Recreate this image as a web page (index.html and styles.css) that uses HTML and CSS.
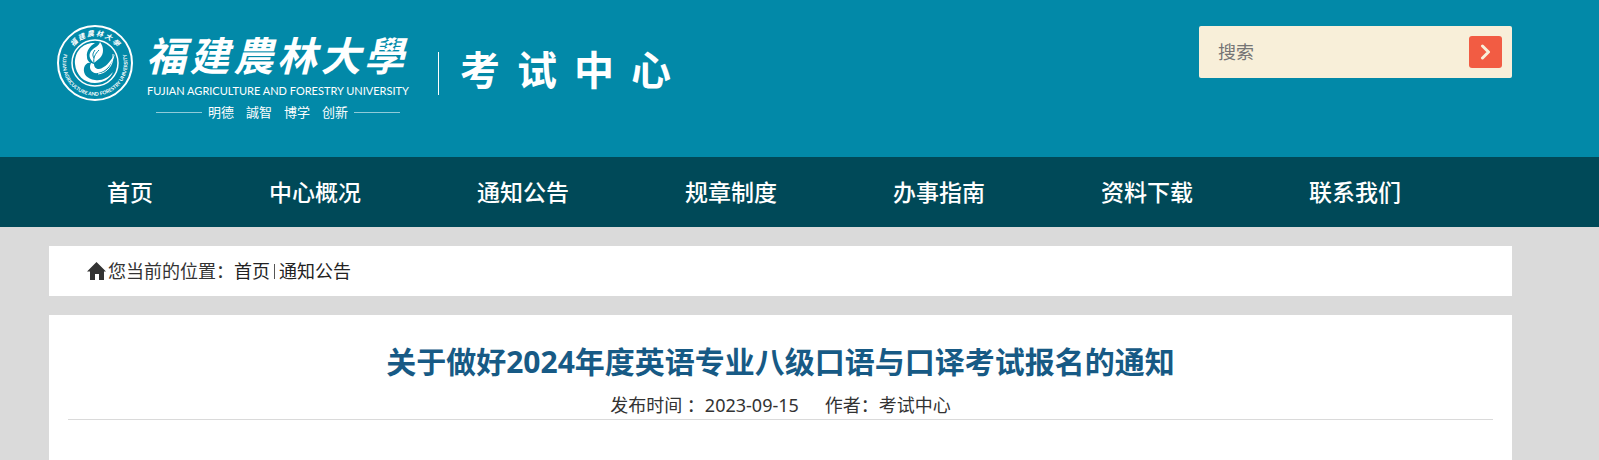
FILE: index.html
```
<!DOCTYPE html>
<html lang="zh-CN">

<head>
    <meta charset="UTF-8">
    <meta name="viewport" content="width=device-width, initial-scale=1.0">
    <title>考试中心</title>
    <link rel="stylesheet" href="styles.css">
</head>

<body>

    <!-- Header -->
    <header class="header">
        <div class="brand">
            <svg class="emblem" viewBox="0 0 78 78" aria-hidden="true">
                <defs>
                    <path id="arcTop" d="M12 39a27 27 0 0 1 54 0" />
                    <path id="arcBottom" d="M10.200 24.200A32.500 32.500 0 1 0 67.800 24.200" />
                </defs>
                <circle cx="39" cy="39" r="37" fill="none" stroke="#fff" stroke-width="2" />
                <circle cx="39" cy="39" r="23" fill="none" stroke="#fff" stroke-width="1.500" />
                <path fill="#fff" d="M39 19C27 18 18 28 19 40c1 11 9 19 20 19 8 0 15-4 18-11-5 6-11 9-18 8-8-1-12-6-11-12 1-4 4-6 7-5-3 6 1 11 7 10 8-1 14-9 17-19-5 8-10 14-16 15-3 0-5-2-5-5-4-1-7-3-7-7-1-6 3-11 8-14z" />
                <path fill="#fff" d="M38 39c-5-4-6-9-2-13 3-3 7-4 8-8 4 5 4 12 0 16-2 2-4 3-6 5z" />
                <path fill="none" stroke="#0289a8" stroke-width="1" d="M38 39c-1-5 1-9 5-13M38 34c-2-3-1-5 1-8" />
                <path fill="none" stroke="#fff" stroke-width="1" d="M57 30c1 11-6 19-15 20" />
                <text class="seal-cn"><textPath href="#arcTop" startOffset="50%" text-anchor="middle">福 建 農 林 大 學</textPath></text>
                <text class="seal-en"><textPath href="#arcBottom" startOffset="50%" text-anchor="middle">FUJIAN AGRICULTURE AND FORESTRY UNIVERSITY</textPath></text>
            </svg>
            <div class="school">
                <div class="school-name">
                    <span>福</span><span>建</span><span>農</span><span>林</span><span>大</span><span>學</span>
                </div>
                <div class="school-en">FUJIAN AGRICULTURE AND FORESTRY UNIVERSITY</div>
                <div class="motto">
                    <span>明德</span><span>誠智</span><span>博学</span><span>创新</span>
                </div>
            </div>
            <div class="center-name">
                <span>考</span><span>试</span><span>中</span><span>心</span>
            </div>
        </div>

        <form class="search">
            <input type="text" class="search-input" placeholder="搜索" aria-label="搜索">
            <button type="submit" class="search-button" aria-label="搜索">
                <svg class="search-icon" viewBox="0 0 12 16" aria-hidden="true">
                    <path d="M2.500 2l6 6-6 6" />
                </svg>
            </button>
        </form>
    </header>

    <!-- Navigation -->
    <nav class="nav">
        <a href="#">首页</a>
        <a href="#">中心概况</a>
        <a href="#">通知公告</a>
        <a href="#">规章制度</a>
        <a href="#">办事指南</a>
        <a href="#">资料下载</a>
        <a href="#">联系我们</a>
    </nav>

    <main class="main">
        <!-- Breadcrumb -->
        <div class="breadcrumb">
            <svg class="home-icon" viewBox="0 0 19 18" aria-hidden="true">
                <path d="M9.500 0L19 9.500h-2V18h-5v-6H8v6H3V9.500H0z" />
            </svg>
            <span>您当前的位置：</span>
            <a href="#">首页</a>
            <span class="line"></span>
            <a href="#">通知公告</a>
        </div>

        <!-- Article -->
        <article class="article">
            <h1>关于做好2024年度英语专业八级口语与口译考试报名的通知</h1>
            <div class="info">
                <span>发布时间 ：2023-09-15</span>
                <span>作者：考试中心</span>
            </div>
        </article>
    </main>

</body>

</html>
```
FILE: styles.css
```
/* Global Reset */
* {
    margin: 0;
    padding: 0;
    box-sizing: border-box;
}

/* Body */
body {
    font-family: "Noto Sans", "Noto Sans CJK SC", sans-serif;
    font-size: 18px;
    line-height: 26px;
    color: #333;
    background-color: #dadada;
    min-height: 100vh;
    display: flex;
    flex-direction: column;
}

a {
    color: inherit;
    text-decoration: none;
}

/* Header */
.header {
    display: flex;
    justify-content: space-between;
    align-items: flex-start;
    height: 157px;
    padding: 24px 87px 0 56px;
    background-color: #0289a8;
}

.brand {
    display: flex;
    align-items: flex-start;
    color: #fff;
}

.emblem {
    width: 78px;
    height: 78px;
}

.seal-cn {
    font-family: "Noto Sans CJK SC", sans-serif;
    font-size: 7px;
    font-weight: bold;
    font-style: italic;
    fill: #fff;
}

.seal-en {
    font-family: Lato, sans-serif;
    font-size: 5px;
    font-weight: bold;
    fill: #fff;
}

.school {
    width: 264px;
    margin-left: 12px;
}

.school-name {
    display: flex;
    justify-content: space-between;
    padding-right: 6px;
    font-family: "Noto Sans CJK SC", sans-serif;
    font-size: 40px;
    font-weight: bold;
    font-style: italic;
    line-height: 60px;
}

.school-en {
    font-family: Lato, sans-serif;
    font-size: 11px;
    line-height: 14px;
    text-align: center;
    white-space: nowrap;
}

.motto {
    display: flex;
    align-items: center;
    gap: 12px;
    margin-top: 4px;
    padding: 0 10px;
    font-family: "Noto Sans CJK SC", sans-serif;
    font-size: 13px;
    line-height: 20px;
}

.motto::before,
.motto::after {
    content: "";
    flex: 1;
    height: 1px;
    background-color: #8fcbd9;
}

.motto::before {
    margin-right: -6px;
}

.motto::after {
    margin-left: -6px;
}

.center-name {
    display: flex;
    gap: 17px;
    height: 43px;
    margin: 28px 0 0 28px;
    padding-left: 21px;
    border-left: 1px solid #fff;
    font-family: "Noto Sans CJK SC", sans-serif;
    font-size: 40px;
    font-weight: bold;
    line-height: 32px;
}

/* Search */
.search {
    display: flex;
    align-items: center;
    width: 313px;
    height: 52px;
    margin-top: 2px;
    padding: 0 10px 0 19px;
    background-color: #f8efd9;
    border-radius: 2px;
}

.search-input {
    flex: 1;
    min-width: 0;
    border: none;
    outline: none;
    background: transparent;
    font-family: inherit;
    font-size: 18px;
    color: #333;
}

.search-input::placeholder {
    color: #757575;
}

.search-button {
    display: flex;
    justify-content: center;
    align-items: center;
    width: 33px;
    height: 32px;
    border: none;
    border-radius: 3px;
    background-color: #f25c43;
    cursor: pointer;
}

.search-icon {
    width: 12px;
    height: 16px;
    fill: none;
    stroke: #f8efd9;
    stroke-width: 3;
    stroke-linecap: round;
    stroke-linejoin: round;
}

/* Navigation */
.nav {
    display: flex;
    padding: 0 87px 0 49px;
    background-color: #004958;
}

.nav a {
    padding: 0 58px;
    font-size: 23px;
    font-weight: 500;
    line-height: 70px;
    color: #fff;
    white-space: nowrap;
}

/* Content */
.main {
    flex: 1;
    display: flex;
    flex-direction: column;
    gap: 19px;
    padding: 19px 87px 0 49px;
}

.breadcrumb {
    display: flex;
    align-items: center;
    height: 50px;
    padding: 0 38px;
    background-color: #fff;
}

.breadcrumb a {
    color: #222;
}

.home-icon {
    width: 19px;
    height: 18px;
    margin-right: 2px;
    fill: #333;
}

.line {
    width: 1px;
    height: 15px;
    margin: 0 4px;
    background-color: #555;
}

/* Article */
.article {
    flex: 1;
    padding: 25px 19px;
    background-color: #fff;
}

.article h1 {
    font-size: 30px;
    line-height: 44px;
    text-align: center;
    color: #175a85;
}

.info {
    display: flex;
    justify-content: center;
    gap: 26px;
    padding: 8px 0 1px;
    border-bottom: 1px solid #dadada;
}
```
